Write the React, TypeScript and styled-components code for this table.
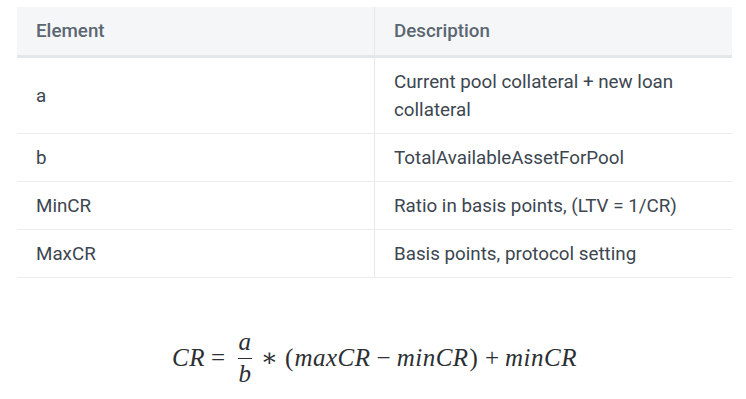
import React from 'react';
import styled, { createGlobalStyle } from 'styled-components';

const GlobalStyle = createGlobalStyle`
  body {
    margin: 0;
    background: #ffffff;
    font-family: Roboto, "Liberation Sans", sans-serif;
  }
`;

const rows = [
  { element: 'a', description: 'Current pool collateral + new loan collateral' },
  { element: 'b', description: 'TotalAvailableAssetForPool' },
  { element: 'MinCR', description: 'Ratio in basis points, (LTV = 1/CR)' },
  { element: 'MaxCR', description: 'Basis points, protocol setting' },
];

const App: React.FC = () => (
  <Page>
    <GlobalStyle />
    <Table>
      <thead>
        <tr>
          <HeadCell>Element</HeadCell>
          <HeadCell>Description</HeadCell>
        </tr>
      </thead>
      <tbody>
        {rows.map((row, index) => (
          <tr key={index}>
            <Cell>{row.element}</Cell>
            <Cell>{row.description}</Cell>
          </tr>
        ))}
      </tbody>
    </Table>

    <Formula>
      <Var>CR</Var>
      <Rel>=</Rel>
      <Fraction>
        <Var>a</Var>
        <FracLine />
        <Var>b</Var>
      </Fraction>
      <Op>∗</Op>
      <Paren>(</Paren>
      <Var>maxCR</Var>
      <Op>−</Op>
      <Var>minCR</Var>
      <Paren>)</Paren>
      <Op>+</Op>
      <Var>minCR</Var>
    </Formula>
  </Page>
);

const Page = styled.div`
  padding: 7px 14px 0 17px;
`;

const Table = styled.table`
  width: 715px;
  border-collapse: collapse;
  table-layout: fixed;
  font-size: 18.8px;
  line-height: 28px;
`;

const HeadCell = styled.th`
  background: #f5f6f8;
  color: #5b6671;
  font-weight: 500;
  text-align: left;
  padding: 10px 20px 10px 19px;
  border-bottom: 3px solid #e4e7ea;
  & + & {
    border-left: 1px solid #e6e8eb;
  }
`;

const Cell = styled.td`
  color: #3c4650;
  padding: 10px 20px 9px 19px;
  border-bottom: 1px solid #eaecef;
  vertical-align: middle;
  & + & {
    border-left: 1px solid #e6e8eb;
  }
`;

const Formula = styled.div`
  display: flex;
  justify-content: center;
  align-items: center;
  margin-top: 53px;
  font-family: "Liberation Serif", "DejaVu Serif", serif;
  font-size: 25px;
  line-height: 22px;
  color: #2b2f33;
`;

const Var = styled.span`
  font-style: italic;
  letter-spacing: 0.5px;
`;

const Rel = styled.span`
  margin: 0 10px 0 6px;
`;

const Op = styled.span`
  margin: 0 6px;
`;

const Paren = styled.span`
  margin: 0 1px;
`;

const Fraction = styled.span`
  display: inline-flex;
  flex-direction: column;
  align-items: center;
  margin: 0 3px;
`;

const FracLine = styled.span`
  width: 14px;
  height: 1px;
  background: #2b2f33;
  margin: 5px 0 4px;
`;

export default App;
